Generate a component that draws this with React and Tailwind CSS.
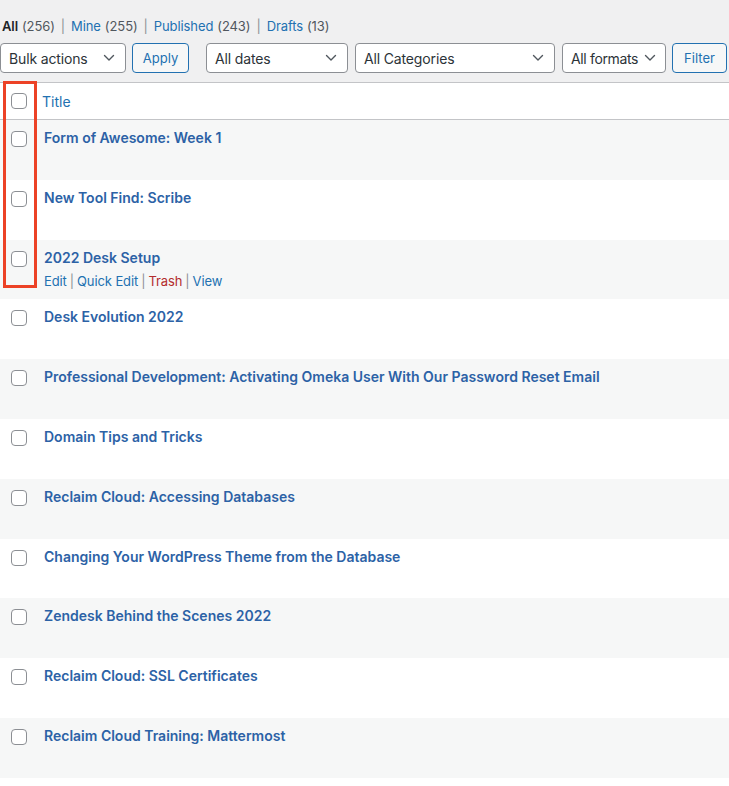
import React from "react";

const titles = [
  "Form of Awesome: Week 1",
  "New Tool Find: Scribe",
  "2022 Desk Setup",
  "Desk Evolution 2022",
  "Professional Development: Activating Omeka User With Our Password Reset Email",
  "Domain Tips and Tricks",
  "Reclaim Cloud: Accessing Databases",
  "Changing Your WordPress Theme from the Database",
  "Zendesk Behind the Scenes 2022",
  "Reclaim Cloud: SSL Certificates",
  "Reclaim Cloud Training: Mattermost",
];

function Chevron() {
  return (
    <svg width="12" height="8" viewBox="0 0 12 8" fill="none" className="shrink-0">
      <path d="M1.5 1.5 L6 6 L10.5 1.5" stroke="#50575e" strokeWidth="1.4" strokeLinecap="round" strokeLinejoin="round" />
    </svg>
  );
}

function Select({ label, w, pr = "pr-[10px]", t = "tracking-[-0.15px]" }) {
  return (
    <div className={`h-[30px] ${w} flex items-center justify-between pl-2 ${pr} bg-white border border-[#8c8f94] rounded-[4px] text-[14px] ${t} text-[#2c3338]`}>
      <span className="pt-[1px]">{label}</span>
      <Chevron />
    </div>
  );
}

function Btn({ label, w }) {
  return (
    <div className={`h-[30px] ${w} flex items-center justify-center pt-[1px] bg-[#f6f7f7] border border-[#2271b1] rounded-[4px] text-[13px] text-[#2271b1]`}>
      {label}
    </div>
  );
}

function Box() {
  return <div className="w-4 h-4 rounded-[4px] border border-[#8c8f94] bg-white shrink-0" />;
}

function Sep({ m = "mx-[6px]" }) {
  return <span className={`${m} text-[#8c8f94]`}>|</span>;
}

export default function App() {
  return (
    <div className="w-[729px] h-[786px] overflow-hidden bg-white relative" style={{ fontFamily: "Inter, 'Noto Sans', sans-serif" }}>
      <div className="bg-[#f0f0f1]">
        <div className="pt-[17px] pl-[2px] h-[43px] text-[13px] text-[#50575e] flex items-start tracking-[-0.1px]">
          <span className="text-[#1d2327] font-semibold">All</span>
          <span className="ml-1">(256)</span>
          <Sep />
          <span className="text-[#2271b1]">Mine</span>
          <span className="ml-1">(255)</span>
          <Sep />
          <span className="text-[#2271b1]">Published</span>
          <span className="ml-1">(243)</span>
          <Sep />
          <span className="text-[#2271b1]">Drafts</span>
          <span className="ml-1">(13)</span>
        </div>
        <div className="flex items-center h-[39px] pb-[9px] pl-0">
          <Select label="Bulk actions" w="w-[126px]" />
          <div className="w-[6px]" />
          <Btn label="Apply" w="w-[57px]" />
          <div className="w-[17px]" />
          <Select label="All dates" w="w-[142px]" />
          <div className="w-[7px]" />
          <Select label="All Categories" w="w-[200px]" />
          <div className="w-[7px]" />
          <Select label="All formats" w="w-[104px]" pr="pr-[9px]" t="tracking-[-0.35px]" />
          <div className="w-[6px]" />
          <Btn label="Filter" w="w-[55px]" />
        </div>
      </div>
      <div className="border-t border-[#c3c4c7]">
        <div className="h-[37px] flex items-center border-b border-[#c3c4c7] bg-white">
          <div className="w-[42px] pl-[11px] flex">
            <Box />
          </div>
          <span className="text-[14px] text-[#2271b1]">Title</span>
        </div>
        {titles.map((t, i) => (
          <div key={t} className={`h-[59.8px] flex items-start pt-[11px] ${i % 2 === 0 ? "bg-[#f6f7f7]" : "bg-white"}`}>
            <div className="w-[44px] pl-[11px] flex">
              <Box />
            </div>
            <div className="flex flex-col -mt-[3px]">
              <span className="text-[14px] font-semibold text-[#2c62a6] leading-[20px]">{t}</span>
              {i === 2 && (
                <div className="text-[13px] text-[#2271b1] leading-[18px] mt-[4px] tracking-[-0.1px]">
                  <span>Edit</span>
                  <Sep m="mx-[3px]" />
                  <span>Quick Edit</span>
                  <Sep m="mx-[3px]" />
                  <span className="text-[#b32d2e]">Trash</span>
                  <Sep m="mx-[3px]" />
                  <span>View</span>
                </div>
              )}
            </div>
          </div>
        ))}
      </div>
      <div className="absolute left-[3px] top-[81px] w-[34px] h-[207px] border-[3px] border-[#ec4226]" />
    </div>
  );
}
